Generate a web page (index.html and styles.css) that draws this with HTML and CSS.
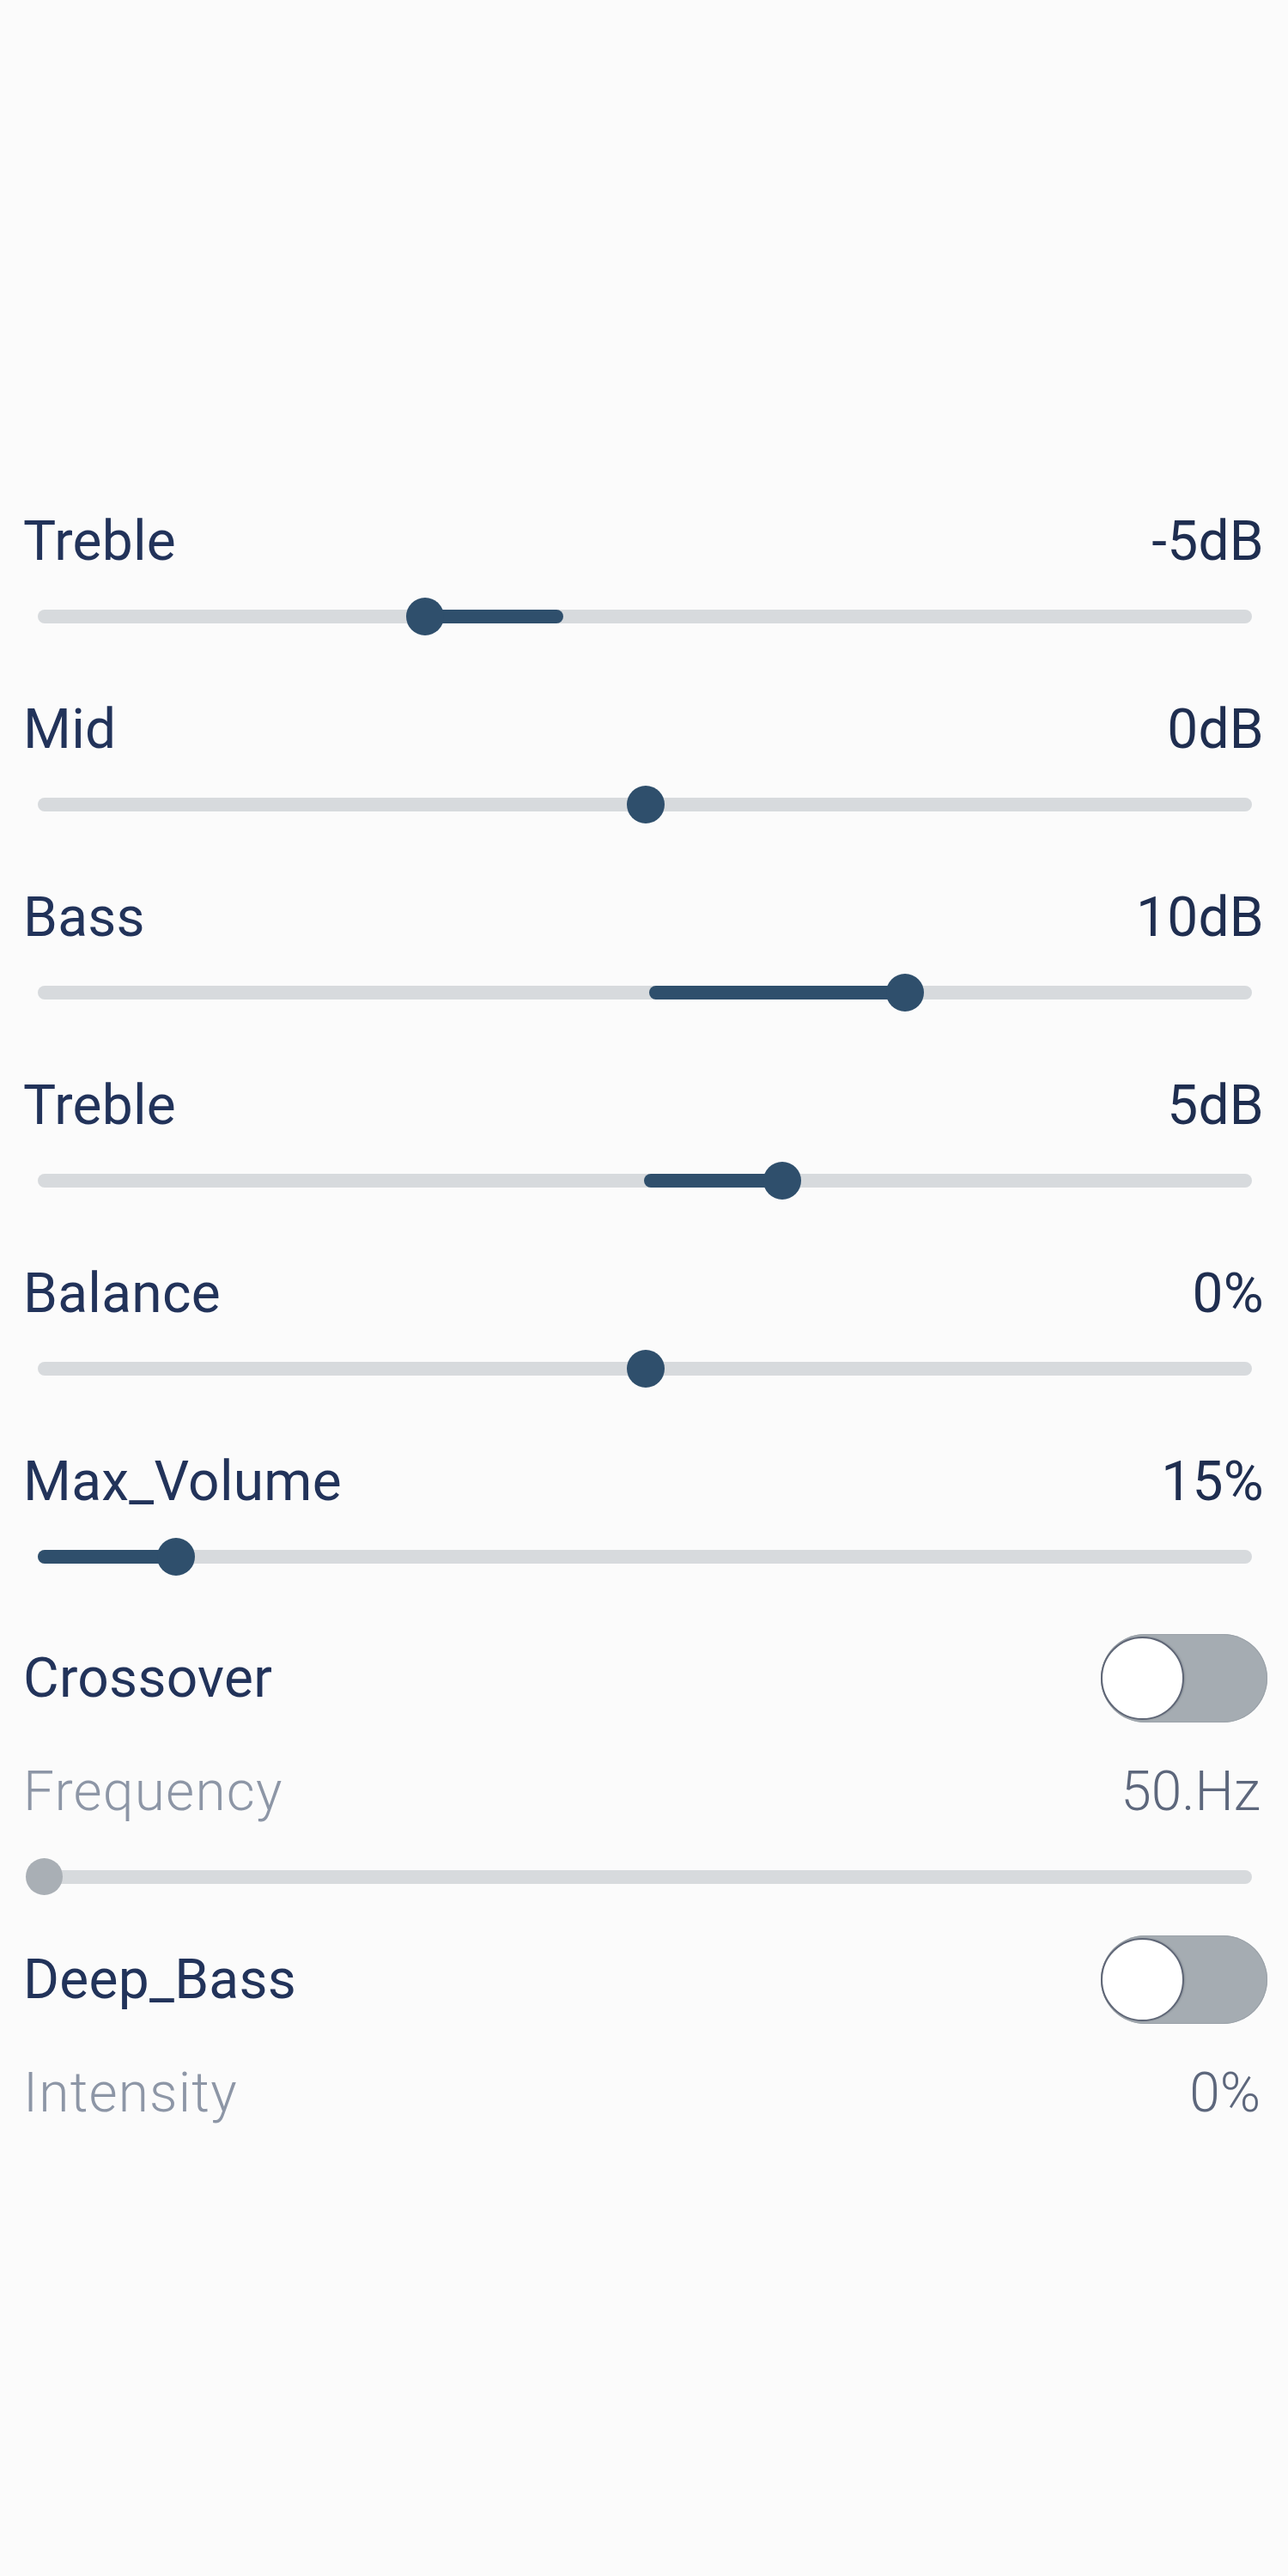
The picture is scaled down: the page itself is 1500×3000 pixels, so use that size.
FILE: index.html
```html
<!DOCTYPE html>
<html lang="en">
<head>
<meta charset="utf-8">
<title>Audio Settings</title>
<link rel="stylesheet" href="styles.css">
</head>
<body>
<main class="panel">
  <section class="slider-row">
    <div class="head"><span class="label">Treble</span><span class="value">-5dB</span></div>
    <div class="slider">
      <div class="track"></div>
      <div class="fill" style="left:31.86%;width:11.42%"></div>
      <div class="thumb" style="left:31.86%"></div>
    </div>
  </section>
  <section class="slider-row">
    <div class="head"><span class="label">Mid</span><span class="value">0dB</span></div>
    <div class="slider">
      <div class="track"></div>
      <div class="thumb" style="left:50.1%"></div>
    </div>
  </section>
  <section class="slider-row">
    <div class="head"><span class="label">Bass</span><span class="value">10dB</span></div>
    <div class="slider">
      <div class="track"></div>
      <div class="fill" style="left:50.35%;width:21.05%"></div>
      <div class="thumb" style="left:71.4%"></div>
    </div>
  </section>
  <section class="slider-row">
    <div class="head"><span class="label">Treble</span><span class="value">5dB</span></div>
    <div class="slider">
      <div class="track"></div>
      <div class="fill" style="left:49.9%;width:11.4%"></div>
      <div class="thumb" style="left:61.3%"></div>
    </div>
  </section>
  <section class="slider-row">
    <div class="head"><span class="label">Balance</span><span class="value">0%</span></div>
    <div class="slider">
      <div class="track"></div>
      <div class="thumb" style="left:50.1%"></div>
    </div>
  </section>
  <section class="slider-row">
    <div class="head"><span class="label">Max_Volume</span><span class="value">15%</span></div>
    <div class="slider">
      <div class="track"></div>
      <div class="fill" style="left:0%;width:11.4%"></div>
      <div class="thumb" style="left:11.4%"></div>
    </div>
  </section>

  <section class="toggle-row first-toggle">
    <span class="label">Crossover</span>
    <span class="toggle"><span class="knob"></span></span>
  </section>
  <section class="sub-row">
    <div class="head"><span class="label muted">Frequency</span><span class="value muted-value">50.Hz</span></div>
    <div class="slider">
      <div class="track"></div>
      <div class="thumb disabled" style="left:0.6%"></div>
    </div>
  </section>

  <section class="toggle-row">
    <span class="label">Deep_Bass</span>
    <span class="toggle"><span class="knob"></span></span>
  </section>
  <section class="sub-row">
    <div class="head"><span class="label muted">Intensity</span><span class="value muted-value">0%</span></div>
  </section>
</main>
</body>
</html>
```

FILE: styles.css
```css
* { box-sizing: border-box; }

html, body {
  margin: 0;
  padding: 0;
  background: #fbfbfb;
}

body {
  font-family: Roboto, "Liberation Sans", Arial, sans-serif;
  color: #22335a;
}

.panel {
  padding: 599px 28px 0 27px;
  display: flex;
  flex-direction: column;
}

.head {
  height: 64px;
  display: flex;
  justify-content: space-between;
  align-items: center;
  line-height: 64px;
}

.label,
.value {
  font-size: 64px;
  font-weight: 400;
  line-height: 64px;
  white-space: nowrap;
  letter-spacing: 0.3px;
}

.value { color: #1f2e50; }

.muted {
  color: #8d96a6;
  font-weight: 300;
  letter-spacing: 1.2px;
}

.muted-value {
  color: #5d677c;
  font-weight: 300;
  letter-spacing: 0;
  margin-right: 4px;
}

.slider-row {
  height: 219px;
  display: flex;
  flex-direction: column;
  gap: 33px;
}

.slider {
  position: relative;
  height: 44px;
  margin: 0 14px 0 17px;
}

.track {
  position: absolute;
  left: 0;
  right: 0;
  top: 14px;
  height: 16px;
  border-radius: 8px;
  background: #d7dadd;
}

.fill {
  position: absolute;
  top: 14px;
  height: 16px;
  border-radius: 8px;
  background: #2f4f6c;
}

.thumb {
  position: absolute;
  top: 0;
  width: 44px;
  height: 44px;
  margin-left: -22px;
  border-radius: 50%;
  background: #2f4f6c;
}

.thumb.disabled {
  background: #a9afb5;
  width: 43px;
  height: 43px;
}

.toggle-row {
  height: 103px;
  display: flex;
  justify-content: space-between;
  align-items: center;
}

.first-toggle { margin-top: -10px; }

.toggle {
  position: relative;
  width: 194px;
  height: 103px;
  border-radius: 52px;
  background: #a5acb2;
  box-shadow: inset 0 0 0 1px #9aa1a8;
  margin-right: -4px;
}

.knob {
  position: absolute;
  left: 0;
  top: 3px;
  width: 97px;
  height: 97px;
  border-radius: 50%;
  background: #ffffff;
  border: 2px solid #5f6676;
  box-shadow: 1px 0 2px rgba(60, 66, 80, 0.25);
}

.sub-row {
  margin-top: 49px;
  display: flex;
  flex-direction: column;
  gap: 45px;
  padding-bottom: 46px;
}
```
